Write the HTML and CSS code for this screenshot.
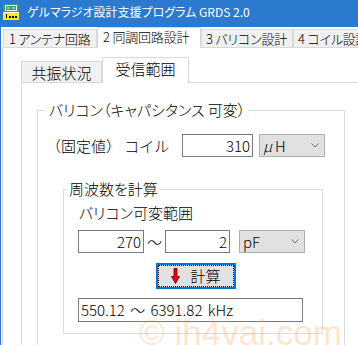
FILE: index.html
```html
<!DOCTYPE html>
<html lang="ja">
<head>
    <meta charset="UTF-8">
    <title>ゲルマラジオ設計支援プログラム GRDS 2.0</title>
    <link rel="stylesheet" href="styles.css">
</head>
<body>
<div class="window">
    <div class="titlebar">
        <svg class="app-icon" width="16" height="16" viewBox="0 0 16 16">
            <rect x="0" y="0" width="16" height="8" fill="#2c9a86"/>
            <rect x="2.5" y="1.5" width="11" height="5" fill="none" stroke="#fff"/>
            <rect x="4" y="3" width="3" height="2" fill="#8fe04c"/>
            <rect x="9" y="3.5" width="3" height="1" fill="#fff"/>
            <rect x="0" y="8" width="16" height="8" fill="#fff000"/>
            <rect x="0" y="8" width="16" height="1" fill="#fff"/>
            <rect x="3" y="10" width="1" height="4" fill="#000"/>
            <rect x="6" y="12" width="2" height="2" fill="#000"/>
            <rect x="9" y="12" width="2" height="2" fill="#000"/>
            <rect x="12" y="12" width="2" height="2" fill="#000"/>
        </svg>
        <span class="title">ゲルマラジオ設計支援プログラム GRDS 2.0</span>
    </div>

    <div class="tabs">
        <div class="tab tab-1">1 アンテナ回路</div>
        <div class="tab tab-2 active">2 同調回路設計</div>
        <div class="tab tab-3">3 バリコン設計</div>
        <div class="tab tab-4">4 コイル設計</div>
    </div>

    <div class="page">
        <div class="subtabs">
            <div class="subtab sub-1">共振状況</div>
            <div class="subtab sub-2 active">受信範囲</div>
        </div>

        <div class="subpage">
            <fieldset class="group group-vc">
                <legend>バリコン（キャパシタンス 可変）</legend>

                <div class="row coil-row">
                    <span class="coil-label">（固定値） コイル</span>
                    <div class="textbox coil-box">310</div>
                    <div class="combo coil-unit">
                        <span class="mu">μ</span><span>H</span>
                        <svg class="chevron" width="8" height="5" viewBox="0 0 8 5"><polyline points="0.5,0.5 4,4 7.5,0.5" fill="none" stroke="#6d6d6d"/></svg>
                    </div>
                </div>

                <fieldset class="group group-calc">
                    <legend>周波数を計算</legend>
                    <div class="range-label">バリコン可変範囲</div>
                    <div class="row range-row">
                        <div class="textbox range-min">270</div>
                        <span class="tilde">～</span>
                        <div class="textbox range-max">2</div>
                        <div class="combo range-unit">
                            <span>pF</span>
                            <svg class="chevron" width="8" height="5" viewBox="0 0 8 5"><polyline points="0.5,0.5 4,4 7.5,0.5" fill="none" stroke="#6d6d6d"/></svg>
                        </div>
                    </div>
                    <button class="calc-btn" type="button">
                        <span class="focus-rect">
                            <svg class="arrow" width="9" height="16" viewBox="0 0 9 16">
                                <path d="M3 0.5 H6 V8.5 H8.5 L4.5 15.5 L0.5 8.5 H3 Z" fill="#f00000" stroke="#5a0000" stroke-width="0.8"/>
                            </svg>
                            <span>計算</span>
                        </span>
                    </button>
                    <div class="textbox result">550.12 ～ 6391.82 kHz</div>
                </fieldset>
            </fieldset>
        </div>
    </div>

    <!-- watermark over the form -->
    <div class="watermark">© jh4vaj.com</div>
</div>
</body>
</html>
```

FILE: styles.css
```css
* {
    margin: 0;
    padding: 0;
    box-sizing: border-box;
}

body {
    width: 358px;
    height: 345px;
    overflow: hidden;
    background: #fff;
    color: #000;
    font-family: "Noto Sans CJK JP", sans-serif;
    font-size: 15px;
    font-weight: 300;
    font-feature-settings: "palt";
}

.window {
    position: relative;
    width: 358px;
    height: 345px;
    overflow: hidden;
    border-left: 1px solid #2b7ad0;
    background: #fff;
}

/* title bar */
.titlebar {
    display: flex;
    align-items: flex-start;
    height: 27px;
    padding: 4px 0 0 2px;
    background: #2b7ad0;
    color: #fff;
}

.app-icon {
    display: block;
    flex: none;
}

.title {
    margin-left: 8px;
    font-size: 12px;
    font-weight: 400;
    line-height: 16px;
    white-space: nowrap;
}

/* main tabs */
.tabs {
    display: flex;
    align-items: flex-end;
    height: 20px;
    padding-left: 2px;
}

.tab {
    flex: none;
    height: 18px;
    padding: 0 0 0 5px;
    border: 1px solid #d9d9d9;
    border-bottom: none;
    background: #f0f0f0;
    font-size: 13px;
    letter-spacing: -0.2px;
    line-height: 17px;
    white-space: nowrap;
    overflow: hidden;
}

.tab-1 { width: 94px; }
.tab-2 { width: 104px; }
.tab-3 { width: 92px; padding-left: 4px; }
.tab-4 { width: 90px; padding-left: 4px; }

.tab.active {
    position: relative;
    z-index: 1;
    height: 21px;
    margin-bottom: -1px;
    background: #fff;
}

.page {
    width: 420px;
    height: 320px;
    margin-left: 1px;
    padding: 9px 0 0 18px;
    border-top: 1px solid #d9d9d9;
    border-left: 1px solid #d9d9d9;
}

/* sub tabs */
.subtabs {
    display: flex;
    align-items: flex-end;
    height: 25px;
}

.subtab {
    flex: none;
    border: 1px solid #d9d9d9;
    border-bottom: none;
    text-align: center;
    white-space: nowrap;
}

.sub-1 {
    width: 81px;
    height: 21px;
    padding-top: 2px;
    line-height: 18px;
    background: #f0f0f0;
}

.sub-2 {
    width: 87px;
    height: 26px;
    padding-top: 1px;
    line-height: 20px;
}

.subtab.active {
    position: relative;
    z-index: 1;
    margin-bottom: -1px;
    background: #fff;
}

.subpage {
    height: 300px;
    padding-left: 15px;
    border-top: 1px solid #d9d9d9;
    border-left: 1px solid #d9d9d9;
}

/* group boxes */
.group {
    border: 1px solid #dcdcdc;
    padding: 0;
    min-width: 0;
}

.group legend {
    padding: 0 3px;
    line-height: 20px;
    white-space: nowrap;
}

.group-vc {
    width: 308px;
    height: 300px;
    margin-top: 17px;
}

.group-vc > legend {
    margin-left: 8px;
}

.group-calc {
    width: 260px;
    height: 155px;
    margin: 22px 0 0 25px;
}

.group-calc > legend {
    margin-left: 3px;
    padding: 0 2px;
}

.row {
    display: flex;
    align-items: center;
    height: 23px;
}

.coil-row {
    margin: 14px 0 0 8px;
}

.coil-label {
    width: 136px;
    font-feature-settings: normal;
    white-space: nowrap;
}

.textbox {
    height: 23px;
    border: 1px solid #7a7a7a;
    background: #fff;
    line-height: 21px;
    white-space: nowrap;
    font-feature-settings: normal;
}

.coil-box,
.range-min,
.range-max {
    padding-right: 2px;
    text-align: right;
}

.coil-box { width: 71px; }
.range-min { width: 66px; }
.range-max { width: 65px; }

.combo {
    display: flex;
    align-items: center;
    width: 66px;
    height: 23px;
    padding: 0 5px 0 3px;
    border: 1px solid #adadad;
    background: #e1e1e1;
    line-height: 21px;
}

.combo .chevron {
    margin-left: auto;
}

.coil-unit {
    margin-left: 6px;
}

.mu {
    font-style: italic;
    margin-right: 3px;
}

.range-label {
    margin: 4px 0 0 15px;
    line-height: 20px;
}

.range-row {
    margin: 7px 0 0 14px;
}

.tilde {
    width: 21px;
    text-align: center;
}

.range-unit {
    margin-left: 9px;
}

.calc-btn {
    display: block;
    width: 80px;
    height: 26px;
    margin: 10px 0 0 92px;
    border: 2px solid #0078d7;
    background: #e1e1e1;
    font: inherit;
    color: #000;
}

.focus-rect {
    display: flex;
    align-items: center;
    justify-content: center;
    gap: 10px;
    height: 100%;
    border: 1px dotted #000;
    line-height: 20px;
}

.arrow {
    display: block;
}

.result {
    width: 225px;
    height: 24px;
    margin: 9px 0 0 14px;
    padding-left: 2px;
    line-height: 22px;
    word-spacing: 2px;
}

.watermark {
    position: absolute;
    left: 138px;
    top: 313px;
    font-family: "Liberation Sans", sans-serif;
    font-size: 35px;
    font-weight: 400;
    line-height: 40px;
    color: rgba(248, 150, 60, 0.25);
    white-space: nowrap;
    pointer-events: none;
}
```
